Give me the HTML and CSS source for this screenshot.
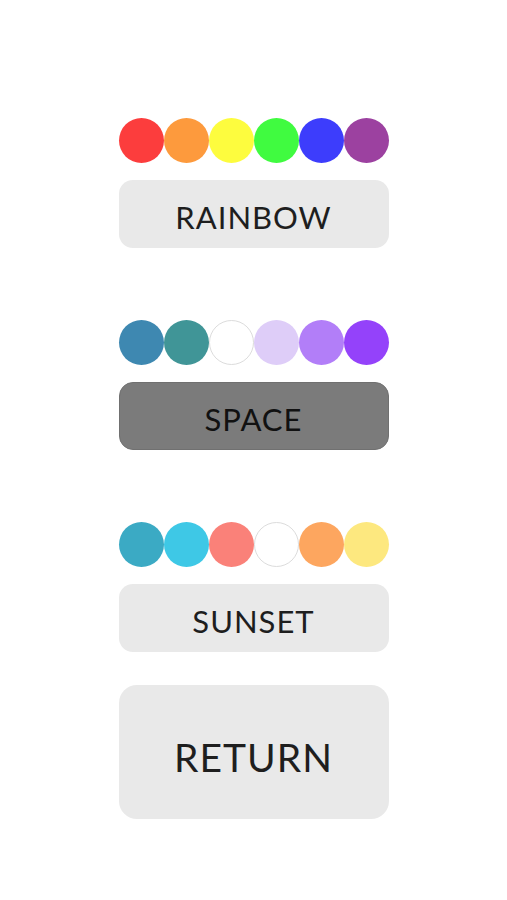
FILE: index.html
```html
<!DOCTYPE html>
<html lang="en">
<head>
    <meta charset="UTF-8">
    <meta name="viewport" content="width=device-width, initial-scale=1.0">
    <title>Themes</title>
    <link rel="stylesheet" href="styles.css">
</head>
<body>
    <div class="container">
        <div class="theme">
            <div class="swatches">
                <span class="dot" style="background:#fc3d3d"></span>
                <span class="dot" style="background:#fd9a3d"></span>
                <span class="dot" style="background:#fdfc3e"></span>
                <span class="dot" style="background:#40fb40"></span>
                <span class="dot" style="background:#3d3dfc"></span>
                <span class="dot" style="background:#9c41a0"></span>
            </div>
            <a href="#" class="button">RAINBOW</a>
        </div>

        <div class="theme">
            <div class="swatches">
                <span class="dot" style="background:#3e88b1"></span>
                <span class="dot" style="background:#409597"></span>
                <span class="dot white"></span>
                <span class="dot" style="background:#decdf8"></span>
                <span class="dot" style="background:#b27ef8"></span>
                <span class="dot" style="background:#9442fa"></span>
            </div>
            <a href="#" class="button active">SPACE</a>
        </div>

        <div class="theme">
            <div class="swatches">
                <span class="dot" style="background:#3baac4"></span>
                <span class="dot" style="background:#3ec8e6"></span>
                <span class="dot" style="background:#fa8179"></span>
                <span class="dot white"></span>
                <span class="dot" style="background:#fda65f"></span>
                <span class="dot" style="background:#fde87f"></span>
            </div>
            <a href="#" class="button">SUNSET</a>
        </div>

        <a href="#" class="button return">RETURN</a>
    </div>
</body>
</html>
```

FILE: styles.css
```css
body {
    margin: 0;
    padding: 0;
    background-color: #ffffff;
    font-family: "Lato", "DejaVu Sans", sans-serif;
    color: #222;
}
.container {
    width: 270px;
    margin: 0 auto;
    padding-top: 118px;
    display: flex;
    flex-direction: column;
}
.theme {
    display: flex;
    flex-direction: column;
    gap: 17px;
    margin-bottom: 72px;
}
.theme:nth-child(3) {
    margin-bottom: 33px;
}
.swatches {
    display: flex;
}
.dot {
    width: 45px;
    height: 45px;
    border-radius: 50%;
    box-sizing: border-box;
}
.dot.white {
    background: #fff;
    border: 1px solid #dcdcdc;
}
.button {
    display: flex;
    align-items: center;
    justify-content: center;
    height: 68px;
    padding-top: 6px;
    border-radius: 14px;
    background-color: #e9e9e9;
    color: #1e1e1e;
    text-decoration: none;
    font-size: 31px;
    font-weight: 400;
    letter-spacing: 1px;
    box-sizing: border-box;
}
.button.active {
    background-color: #7b7b7b;
    border: 1px solid #707070;
    color: #111;
}
.button.return {
    height: 134px;
    padding-top: 10px;
    border-radius: 18px;
    font-size: 39px;
}
```
